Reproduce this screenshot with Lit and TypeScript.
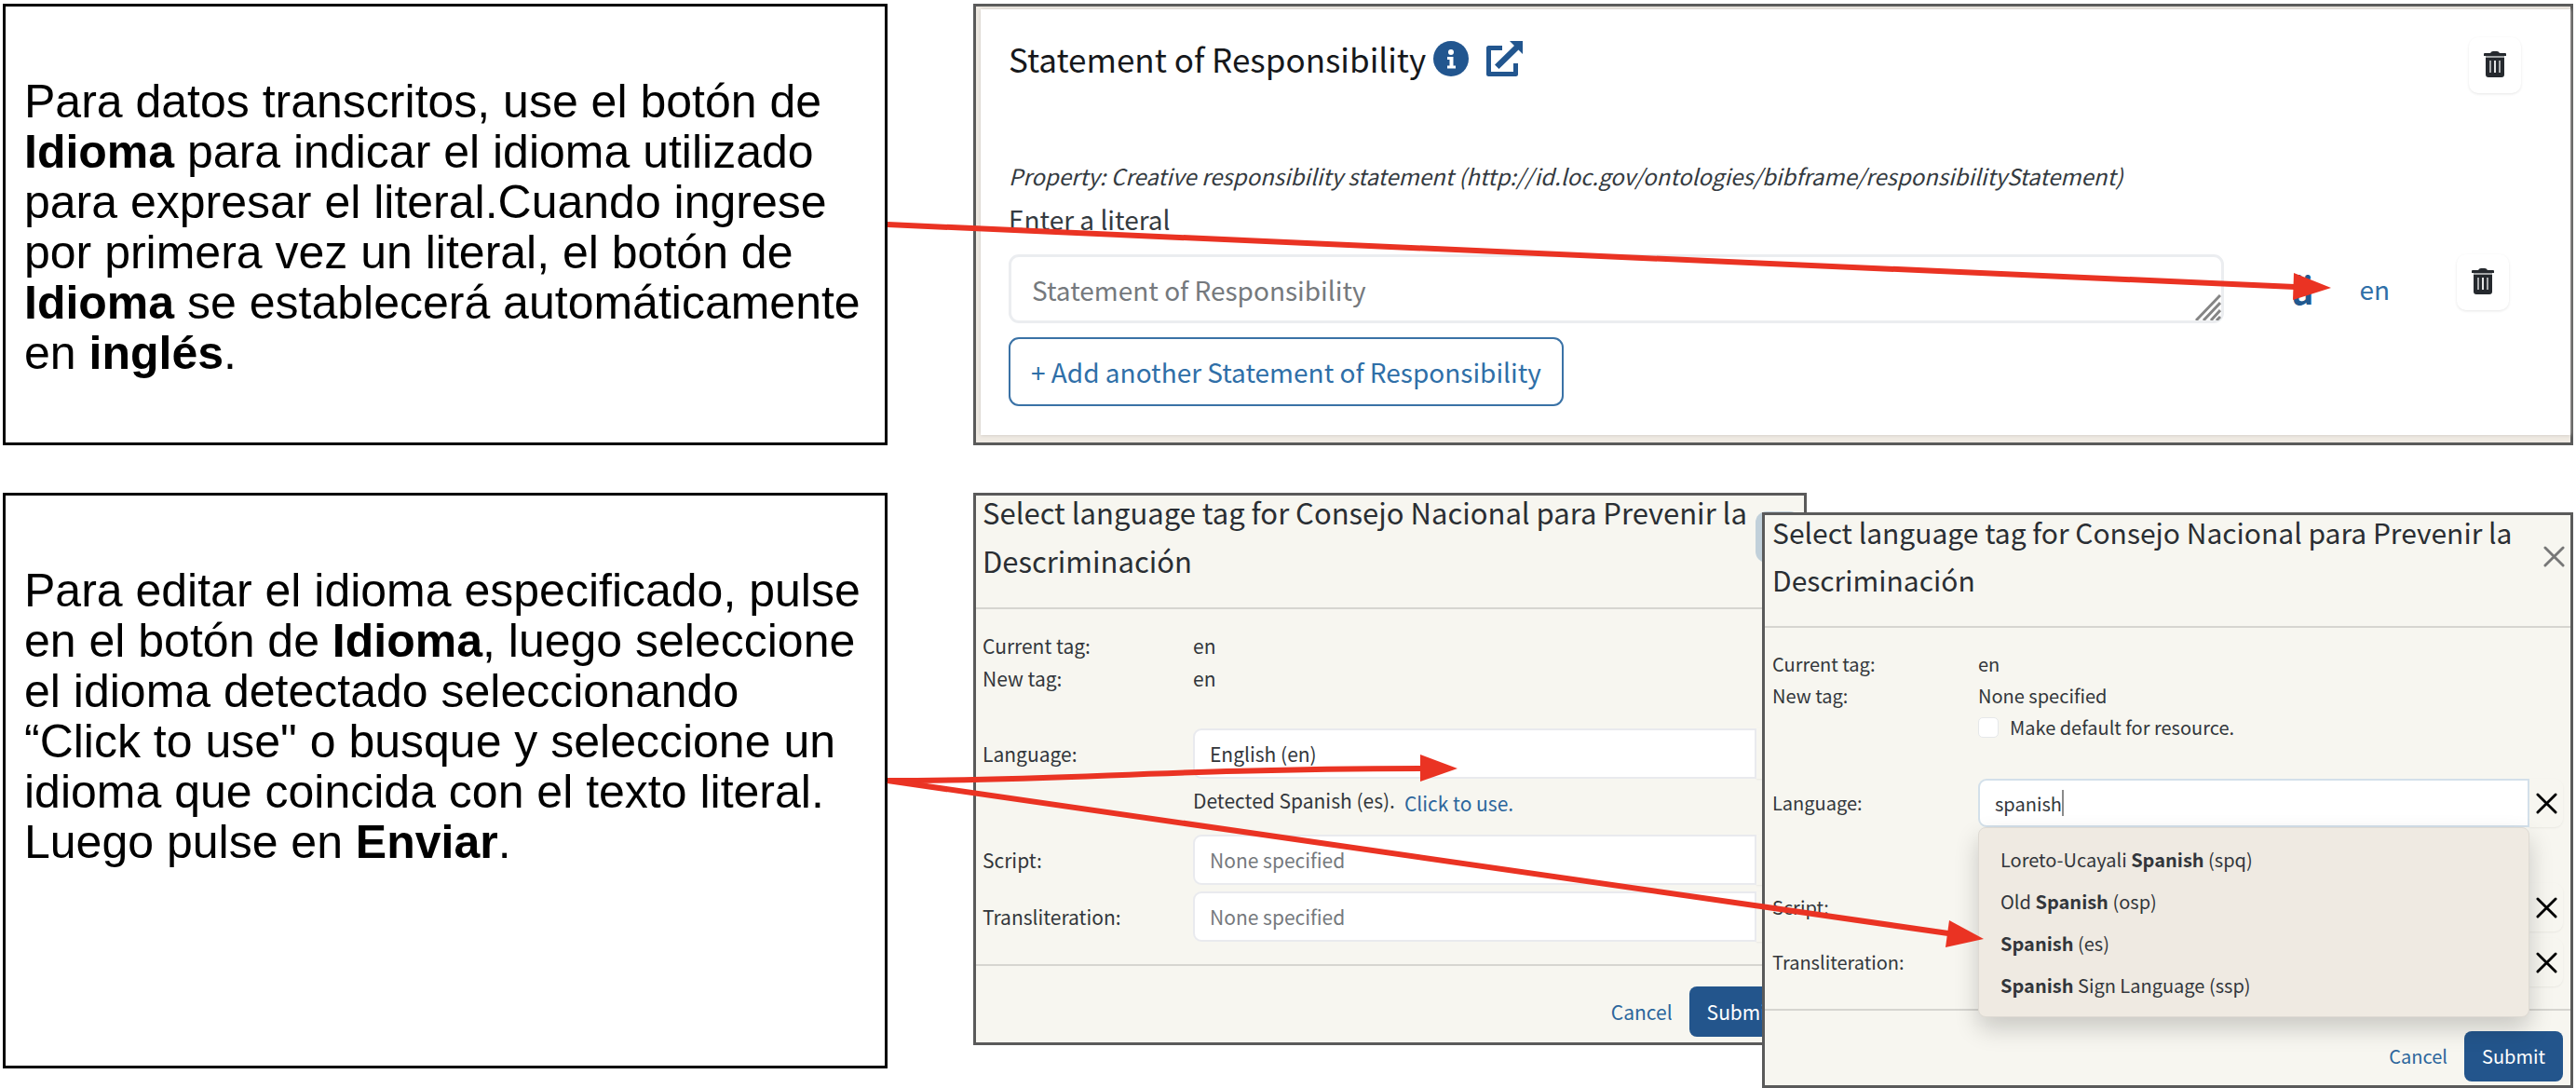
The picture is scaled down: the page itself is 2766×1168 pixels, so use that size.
import { LitElement, html, css, svg, nothing } from "lit";
import { customElement, property } from "lit/decorators.js";

const trashIcon = html`<svg class="trash" viewBox="0 0 24 28" aria-hidden="true">
  <path fill="#25292e" d="M0 3q0-1 1-1h6q1-2 3-2h4q2 0 3 2h6q1 0 1 1v2H0z" />
  <path fill="#a3a6a8" d="M2 5h20v2H2z" />
  <path fill="#25292e" d="M2 7h20v18q0 3-3 3H5q-3 0-3-3z" />
  <path stroke="#a9abad" stroke-width="2" d="M7 10v13M17 10v13" />
  <path stroke="#e4e5e6" stroke-width="2" d="M12 10v13" />
</svg>`;

const crossIcon = html`<svg class="cross" viewBox="0 0 24 24" aria-hidden="true">
  <path fill="none" stroke="currentColor" stroke-width="3" stroke-linecap="round" d="M2 2l20 20M22 2L2 22" />
</svg>`;

interface Option {
  before: string;
  match: string;
  after: string;
}

@customElement("note-card")
export class NoteCard extends LitElement {
  static styles = css`
    :host {
      display: block;
      box-sizing: border-box;
      border: 3px solid #000;
      background: #fff;
      padding: 75px 20px 40px;
      font: 50px/54px "Liberation Sans", sans-serif;
      color: #000;
    }
    .note {
      margin: 0;
    }
  `;
  render() {
    return html`<p class="note"><slot></slot></p>`;
  }
}

@customElement("property-card")
export class PropertyCard extends LitElement {
  static styles = css`
    :host {
      display: block;
      box-sizing: border-box;
      border: 3px solid #5a5a5a;
      background: #efeae3;
      padding: 3px 0 8px 5px;
      font: 28px/46px "Noto Sans CJK SC", sans-serif;
      color: #343a40;
    }
    .panel {
      background: #fff;
      box-shadow: 0 0 4px #c9c5bf;
      padding: 30px 53px 31px 30px;
    }
    .head {
      display: flex;
      justify-content: space-between;
      align-items: flex-start;
      margin-bottom: 66px;
    }
    .title {
      display: flex;
      align-items: center;
      gap: 17px;
    }
    h2 {
      margin: 0 -10px 0 0;
      font: 35px/46px "Noto Sans CJK SC", sans-serif;
      color: #16181b;
    }
    .title a {
      display: flex;
    }
    .title svg {
      width: 40px;
      height: 38px;
    }
    .prop {
      margin: 0;
      font-size: 24px;
      font-style: italic;
    }
    label {
      display: block;
      margin-bottom: 15px;
    }
    .field {
      display: flex;
      align-items: flex-start;
      padding-right: 13px;
      margin-bottom: 15px;
    }
    .box {
      position: relative;
      display: flex;
      flex: 1;
    }
    textarea {
      flex: 1;
      box-sizing: border-box;
      height: 74px;
      resize: none;
      overflow: hidden;
      border: 3px solid #ebedf0;
      border-radius: 11px;
      padding: 12px 22px;
      font: inherit;
      color: inherit;
    }
    textarea::placeholder {
      color: #75797d;
      opacity: 1;
    }
    .grip {
      position: absolute;
      right: 3px;
      bottom: 3px;
      width: 28px;
      height: 28px;
    }
    .actions {
      display: flex;
      align-items: center;
      height: 74px;
      margin-left: 73px;
    }
    button {
      font: inherit;
      background: none;
      border: 0;
      padding: 0;
      color: #2f6fa8;
    }
    .accent {
      font-size: 40px;
      font-weight: 700;
      color: #22598f;
      margin-right: 49px;
    }
    .lang {
      margin-right: 72px;
    }
    .delete {
      display: flex;
      align-items: center;
      justify-content: center;
      width: 56px;
      height: 60px;
      border-radius: 10px;
      box-shadow: 0 1px 3px #e6e6e6;
      padding-bottom: 3px;
      box-sizing: border-box;
    }
    .field .delete {
      align-self: flex-start;
    }
    .trash {
      width: 24px;
      height: 28px;
    }
    .add {
      box-sizing: border-box;
      height: 74px;
      border: 2px solid #3a72a6;
      border-radius: 11px;
      padding: 0 22px;
    }
  `;
  render() {
    return html`
      <section class="panel">
        <header class="head">
          <div class="title">
            <h2>Statement of Responsibility</h2>
            <a href="#info" aria-label="Info">
              <svg viewBox="0 0 40 38">
                <circle cx="20" cy="19" r="19" fill="#22568f" />
                <circle cx="20" cy="12" r="3" fill="#fff" />
                <path fill="#fff" d="M16 17h6.500v9.500h2.500v3h-9v-3h2.500v-6.500h-2.500z" />
              </svg>
            </a>
            <a href="#open" aria-label="Open">
              <svg viewBox="0 0 40 38">
                <path fill="none" stroke="#22568f" stroke-width="5" stroke-linejoin="round" d="M18 7.500H3.500v28h29V24" />
                <path fill="#22568f" d="M26 0h14v14l-4.500-4.500L14.500 30l-4.500-4.500L31 5z" />
              </svg>
            </a>
          </div>
          <button class="delete" aria-label="Remove property">${trashIcon}</button>
        </header>
        <p class="prop">
          Property: Creative responsibility statement
          (http://id.loc.gov/ontologies/bibframe/responsibilityStatement)
        </p>
        <label for="literal">Enter a literal</label>
        <div class="field">
          <div class="box">
            <textarea id="literal" rows="1" placeholder="Statement of Responsibility"></textarea>
            <svg class="grip" viewBox="0 0 28 28" aria-hidden="true">
              <path stroke="#858585" stroke-width="3" d="M1 28L27 1M9 28L27 9M17 28L27 17M23 28L27 24" />
            </svg>
          </div>
          <div class="actions">
            <button class="accent">ä</button>
            <button class="lang">en</button>
            <button class="delete" aria-label="Remove literal">${trashIcon}</button>
          </div>
        </div>
        <button class="add">+ Add another Statement of Responsibility</button>
      </section>
    `;
  }
}

@customElement("language-dialog")
export class LanguageDialog extends LitElement {
  @property() newTag = "";
  @property() language = "";
  @property({ type: Boolean }) showDefault = false;
  @property({ type: Boolean, reflect: true }) compact = false;
  @property({ attribute: false }) options: Option[] = [];

  static styles = css`
    :host {
      --label: 226px;
      --control: 54px;
      --left: 7px;
      --right: 15px;
      display: block;
      box-sizing: border-box;
      border: 3px solid #5a5a5a;
      background: #f7f6f0;
      font: 21px/35px "Noto Sans CJK SC", sans-serif;
      color: #32363b;
    }
    :host([compact]) {
      --label: 221px;
      --control: 52px;
      --left: 8px;
      --right: 8px;
      font-size: 20px;
      line-height: 34px;
    }
    header {
      display: flex;
      align-items: center;
      margin-top: -8px;
      padding: 0 3px 24px var(--left);
      border-bottom: 2px solid #d6d5d0;
    }
    :host([compact]) header {
      margin-top: -7px;
      padding-right: 0;
    }
    h2 {
      flex: 1;
      margin: 0;
      font-size: 31px;
      font-weight: 400;
      line-height: 52px;
      color: #2a2e33;
    }
    :host([compact]) h2 {
      font-size: 30px;
      line-height: 51px;
    }
    button {
      font: inherit;
      background: none;
      border: 0;
      padding: 0;
      color: #2c669c;
    }
    .close {
      display: flex;
      align-items: center;
      justify-content: center;
      width: 49px;
      height: 55px;
      border-radius: 12px;
      background: #c1d0da;
      color: #777;
    }
    :host([compact]) .close {
      width: 36px;
      background: none;
    }
    .body {
      padding: 22px var(--right) 24px var(--left);
    }
    .row {
      display: grid;
      grid-template-columns: var(--label) minmax(0, 1fr);
      align-items: center;
    }
    .tags {
      margin: 0 0 36px;
    }
    :host([compact]) .tags {
      margin-bottom: 38px;
    }
    dt,
    dd {
      margin: 0;
    }
    .default {
      display: flex;
      align-items: center;
      gap: 12px;
    }
    .default input {
      appearance: none;
      margin: 0;
      width: 22px;
      height: 22px;
      border: 1px solid #e6e8ea;
      border-radius: 5px;
      background: #fff;
    }
    .control {
      position: relative;
      display: flex;
    }
    .entry {
      position: relative;
      display: flex;
      flex: 1;
    }
    .entry input {
      flex: 1;
      min-width: 0;
      box-sizing: border-box;
      height: var(--control);
      border: 2px solid #e9eaee;
      border-radius: 9px 0 0 9px;
      padding: 0 16px;
      font: inherit;
      color: inherit;
      background: #fff;
    }
    .entry input::placeholder {
      color: #75797d;
      opacity: 1;
    }
    .entry.active input {
      border-color: #d3e0ea;
    }
    .caret {
      position: absolute;
      left: 90px;
      top: 12px;
      width: 2px;
      height: 28px;
      background: #8a8a8a;
    }
    .clear {
      display: flex;
      align-items: center;
      justify-content: center;
      width: 36px;
      height: var(--control);
      border-radius: 0 9px 9px 0;
      box-shadow: 0 1px 2px #e9e8e2;
      color: #000;
    }
    .cross {
      width: 23px;
      height: 23px;
      flex: none;
    }
    .help {
      box-sizing: border-box;
      min-height: 60px;
      padding: 6px 0 0 var(--label);
      display: flex;
      align-items: flex-start;
      gap: 10px;
    }
    .help button {
      margin-top: 3px;
    }
    .script {
      margin-bottom: 7px;
    }
    ul {
      position: absolute;
      z-index: 1;
      top: 100%;
      left: 0;
      right: 36px;
      margin: 0;
      padding: 11px 23px;
      list-style: none;
      background: #efeae2;
      border: 1px solid #dedad3;
      border-radius: 8px;
      box-shadow: 0 12px 26px #00000030;
      line-height: 45px;
    }
    footer {
      display: flex;
      justify-content: flex-end;
      gap: 18px;
      border-top: 2px solid #d6d5d0;
      padding: 22px 14px 6px;
    }
    :host([compact]) footer {
      padding: 22px 8px 4px;
    }
    .submit {
      height: 54px;
      padding: 0 19px;
      border-radius: 8px;
      background: #23558c;
      color: #fff;
    }
  `;

  private entry(id: string, label: string, value = "", options: Option[] = []) {
    const active = options.length > 0;
    return html`
      <div class="row ${id}">
        <label for=${id}>${label}:</label>
        <div class="control">
          <div class="entry ${active ? "active" : ""}">
            <input id=${id} type="text" .value=${value} placeholder="None specified" />
            ${active ? html`<span class="caret"></span>` : nothing}
          </div>
          <button class="clear" aria-label="Clear ${label}">${crossIcon}</button>
          ${active
            ? html`<ul role="listbox" aria-label=${label}>
                ${options.map(
                  (o) => html`<li role="option">${o.before}<b>${o.match}</b>${o.after}</li>`
                )}
              </ul>`
            : nothing}
        </div>
      </div>
    `;
  }

  render() {
    return html`
      <header>
        <h2>Select language tag for Consejo Nacional para Prevenir la Descriminación</h2>
        <button class="close" aria-label="Close">${crossIcon}</button>
      </header>
      <div class="body">
        <dl class="row tags">
          <dt>Current tag:</dt>
          <dd>en</dd>
          <dt>New tag:</dt>
          <dd>${this.newTag}</dd>
          ${this.showDefault
            ? html`<dt></dt>
                <dd>
                  <label class="default"><input type="checkbox" />Make default for resource.</label>
                </dd>`
            : nothing}
        </dl>
        ${this.entry("language", "Language", this.language, this.options)}
        <div class="help">
          ${this.options.length
            ? nothing
            : html`<span>Detected Spanish (es).</span><button>Click to use.</button>`}
        </div>
        ${this.entry("script", "Script")} ${this.entry("transliteration", "Transliteration")}
      </div>
      <footer>
        <button>Cancel</button>
        <button class="submit">Submit</button>
      </footer>
    `;
  }
}

const matches: Option[] = [
  { before: "Loreto-Ucayali ", match: "Spanish", after: " (spq)" },
  { before: "Old ", match: "Spanish", after: " (osp)" },
  { before: "", match: "Spanish", after: " (es)" },
  { before: "", match: "Spanish", after: " Sign Language (ssp)" },
];

const arrows = [
  { line: "M953 241L2464 308", head: "2463,293 2503,309 2462,322" },
  { line: "M953 838C1160 838 1230 826 1526 825", head: "1525,810 1565,825 1525,839" },
  { line: "M953 838L2092 1002", head: "2093,988 2130,1008 2089,1017" },
];

@customElement("app-root")
export class AppRoot extends LitElement {
  static styles = css`
    :host {
      display: block;
      background: #fff;
    }
    main {
      position: relative;
      display: grid;
      grid-template-columns: minmax(0, 950fr) minmax(0, 1718fr);
      gap: 51px 92px;
      padding: 4px 3px 1px;
    }
    .wide {
      margin-bottom: 21px;
    }
    .windows {
      display: grid;
      grid-template-columns: minmax(0, 847fr) minmax(0, 48fr) minmax(0, 823fr);
      align-items: start;
    }
    .back {
      grid-area: 1 / 1 / 2 / 3;
    }
    .front {
      grid-area: 1 / 2 / 2 / 4;
      margin-top: 21px;
      z-index: 1;
    }
    .arrows {
      position: absolute;
      z-index: 2;
      top: 0;
      left: 0;
      width: 100%;
      pointer-events: none;
    }
  `;
  render() {
    return html`
      <main>
        <note-card>
          Para datos transcritos, use el botón de <b>Idioma</b> para indicar el idioma utilizado
          para expresar el literal.Cuando ingrese por primera vez un literal, el botón de
          <b>Idioma</b> se establecerá automáticamente en <b>inglés</b>.
        </note-card>
        <property-card></property-card>
        <note-card class="wide">
          Para editar el idioma especificado, pulse en el botón de <b>Idioma</b>, luego seleccione
          el idioma detectado seleccionando “Click to use" o busque y seleccione un idioma que
          coincida con el texto literal. Luego pulse en <b>Enviar</b>.
        </note-card>
        <div class="windows">
          <language-dialog class="back" .newTag=${"en"} .language=${"English (en)"}></language-dialog>
          <language-dialog
            class="front"
            compact
            .newTag=${"None specified"}
            .language=${"spanish"}
            .showDefault=${true}
            .options=${matches}
          ></language-dialog>
        </div>
        <svg class="arrows" viewBox="0 0 2766 1168" aria-hidden="true">
          ${arrows.map(
            (a) => svg`<path d=${a.line} fill="none" stroke="#ea3323" stroke-width="6" />
              <polygon points=${a.head} fill="#ea3323" />`
          )}
        </svg>
      </main>
    `;
  }
}
